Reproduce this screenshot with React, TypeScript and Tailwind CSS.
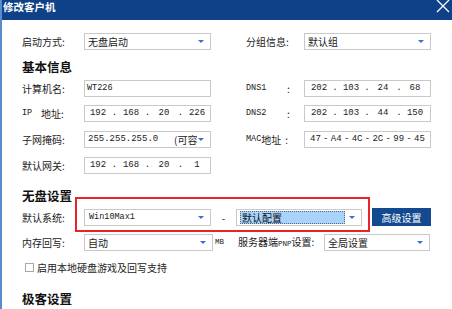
import React from "react";

const cjk = { fontFamily: '"Noto Sans CJK SC", "Noto Sans", sans-serif' };
const mono = { fontFamily: '"Liberation Mono", "DejaVu Sans Mono", monospace' };

function Arrow() {
  return (
    <svg width="6" height="3" viewBox="0 0 6 3" className="shrink-0">
      <polygon points="0,0 6,0 3,3" fill="#3a6fd6" />
    </svg>
  );
}

function Select({ w, children, className = "" }: { w: string; children: React.ReactNode; className?: string }) {
  return (
    <div className={`${w} h-[17px] border border-[#c9c9c9] bg-white flex items-center pl-[3px] pr-[6px] ${className}`}>
      <div className="flex-1 min-w-0 overflow-hidden whitespace-nowrap flex items-center">{children}</div>
      <Arrow />
    </div>
  );
}

function Box({ w, children, className = "" }: { w: string; children: React.ReactNode; className?: string }) {
  return (
    <div className={`${w} h-[17px] border border-[#c9c9c9] bg-white flex items-center overflow-hidden whitespace-nowrap ${className}`}>
      {children}
    </div>
  );
}

function IP({ parts, pl = "pl-[1px]", seg = "w-[24px]", dot = "w-[9px]" }: { parts: string[]; pl?: string; seg?: string; dot?: string }) {
  const out: React.ReactNode[] = [];
  parts.forEach((p, i) => {
    out.push(
      <span key={"s" + i} className={`${seg} text-center`}>
        {p}
      </span>
    );
    if (i < parts.length - 1)
      out.push(
        <span key={"d" + i} className={`${dot} text-center`}>
          .
        </span>
      );
  });
  return (
    <div className={`flex items-center text-[9px] text-[#222] ${pl}`} style={mono}>
      {out}
    </div>
  );
}

function Label({ children, w = "w-[62px]" }: { children: React.ReactNode; w?: string }) {
  return <div className={`${w} shrink-0 text-[10px] text-[#222] whitespace-nowrap`}>{children}</div>;
}

export default function App() {
  return (
    <div className="relative w-[452px] h-[309px] overflow-hidden bg-white border-l-2 border-[#5a8ccc]" style={cjk}>
      {/* title bar */}
      <div className="h-[20px] bg-[#0e4188] flex items-start justify-between text-white">
        <div className="pl-[1px] pt-[1px] text-[10.5px] font-bold leading-[12px]">修改客户机</div>
        <svg width="14" height="13" viewBox="0 0 14 13" className="mr-[2px]">
          <path d="M1 0 L13 12 M13 0 L1 12" stroke="#ffffff" strokeWidth="1.3" />
        </svg>
      </div>

      <div className="pl-[20px] flex flex-col">
        {/* row 1 */}
        <div className="mt-[13px] flex items-center">
          <Label>启动方式:</Label>
          <Select w="w-[127px]">
            <span className="text-[10px] text-[#222]">无盘启动</span>
          </Select>
          <div className="w-[35px]" />
          <Label w="w-[58px]">分组信息:</Label>
          <Select w="w-[127px]">
            <span className="text-[10px] text-[#222]">默认组</span>
          </Select>
        </div>

        <div className="mt-[10px] h-[14px] leading-[14px] text-[12.5px] font-bold text-[#111]">基本信息</div>

        {/* 计算机名 / DNS1 */}
        <div className="mt-[6px] flex items-center">
          <Label>计算机名:</Label>
          <Box w="w-[127px]">
            <span className="pl-[2px] text-[8.5px] text-[#222]" style={mono}>
              WT226
            </span>
          </Box>
          <div className="w-[35px]" />
          <Label w="w-[58px]">
            <span className="flex items-center">
              <span className="text-[8.5px] w-[41px]" style={mono}>
                DNS1
              </span>
              <span>:</span>
            </span>
          </Label>
          <Box w="w-[127px]">
            <IP parts={["202", "103", "24", "68"]} pl="pl-[1px]" seg="w-[26px]" dot="w-[6px]" />
          </Box>
        </div>

        {/* IP / DNS2 */}
        <div className="mt-[8px] flex items-center">
          <Label>
            <span className="flex items-center">
              <span className="text-[8.5px] w-[19px]" style={mono}>
                IP
              </span>
              <span>地址:</span>
            </span>
          </Label>
          <Box w="w-[127px]">
            <IP parts={["192", "168", "20", "226"]} />
          </Box>
          <div className="w-[35px]" />
          <Label w="w-[58px]">
            <span className="flex items-center">
              <span className="text-[8.5px] w-[41px]" style={mono}>
                DNS2
              </span>
              <span>:</span>
            </span>
          </Label>
          <Box w="w-[127px]">
            <IP parts={["202", "103", "44", "150"]} pl="pl-[1px]" seg="w-[26px]" dot="w-[6px]" />
          </Box>
        </div>

        {/* 子网掩码 / MAC */}
        <div className="mt-[9px] flex items-center">
          <Label>子网掩码:</Label>
          <Select w="w-[127px]" className="pl-[2px]">
            <span className="text-[9px] text-[#222] w-[86px] shrink-0" style={mono}>
              255.255.255.0
            </span>
            <span className="text-[10px] text-[#222]">(可容纳</span>
          </Select>
          <div className="w-[35px]" />
          <Label w="w-[58px]">
            <span className="flex items-center">
              <span className="text-[8.5px]" style={mono}>
                MAC
              </span>
              <span>地址</span>
              <span className="ml-[4px]">:</span>
            </span>
          </Label>
          <Box w="w-[127px]">
            <div className="flex-1 flex justify-between px-[5px] text-[9px] text-[#222]" style={mono}>
              {["47", "-", "A4", "-", "4C", "-", "2C", "-", "99", "-", "45"].map((t, i) => (
                <span key={i}>{t}</span>
              ))}
            </div>
          </Box>
        </div>

        {/* 默认网关 */}
        <div className="mt-[9px] flex items-center">
          <Label>默认网关:</Label>
          <Box w="w-[127px]">
            <IP parts={["192", "168", "20", "1"]} />
          </Box>
        </div>

        <div className="mt-[14px] h-[15px] leading-[15px] text-[12.5px] font-bold text-[#111]">无盘设置</div>

        {/* 默认系统 */}
        <div className="mt-[5px] flex items-center">
          <Label>默认系统:</Label>
          <Select w="w-[127px]">
            <span className="text-[8.5px] text-[#222] pl-[1px]" style={mono}>
              Win10Max1
            </span>
          </Select>
          <div className="w-[25px] text-center text-[10px] text-[#222]">-</div>
          <Select w="w-[126px]" className="pl-[2px]">
            <span className="w-[105px] h-[13px] bg-[#a9d3fb] border border-dotted border-[#4a6a8a] text-[10px] leading-[11px] text-[#111] pl-[1px]">
              默认配置
            </span>
          </Select>
          <div className="ml-[10px] w-[59px] h-[18px] bg-[#134a8f] text-white text-[10px] flex items-center justify-center">
            高级设置
          </div>
        </div>

        {/* 内存回写 */}
        <div className="mt-[8px] flex items-center">
          <Label>内存回写:</Label>
          <Select w="w-[129px]">
            <span className="text-[10px] text-[#222]">自动</span>
          </Select>
          <span className="w-[25px] pl-[2px] text-[7.5px] text-[#222]" style={mono}>
            MB
          </span>
          <span className="text-[10px] text-[#222] w-[86px] whitespace-nowrap">
            服务器端<span className="text-[7.5px]" style={mono}>PNP</span>设置:
          </span>
          <Select w="w-[106px]">
            <span className="text-[10px] text-[#222]">全局设置</span>
          </Select>
        </div>

        {/* checkbox */}
        <div className="mt-[10px] h-[12px] flex items-center">
          <div className="ml-[3px] w-[9px] h-[9px] border border-[#a8a8a8] bg-white" />
          <span className="ml-[3px] text-[10px] text-[#222]">启用本地硬盘游戏及回写支持</span>
        </div>

        <div className="mt-[18px] h-[15px] leading-[15px] text-[12.5px] font-bold text-[#111]">极客设置</div>
      </div>

      {/* red annotation box */}
      <div className="absolute left-[73px] top-[197px] w-[295px] h-[35px] border-2 border-[#e5252a] pointer-events-none" />
    </div>
  );
}
